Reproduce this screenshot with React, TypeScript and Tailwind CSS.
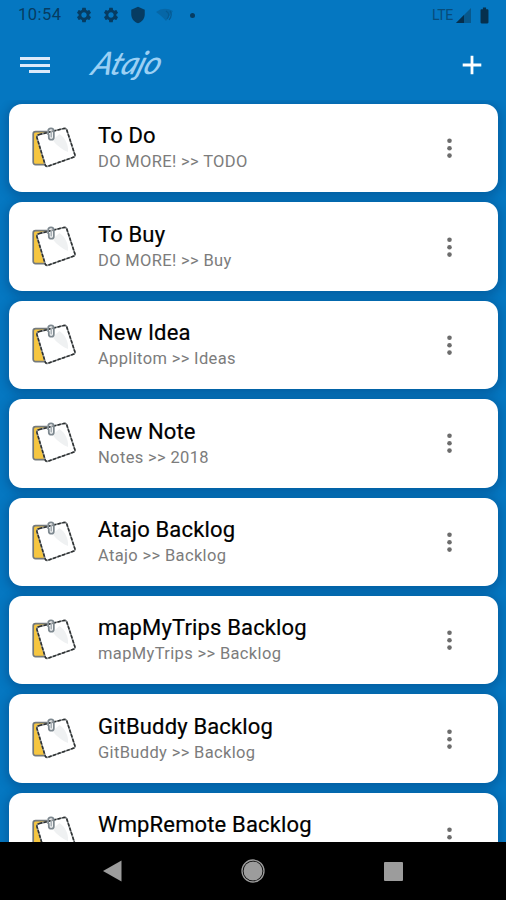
import { MdSettings, MdShield, MdBatteryFull } from "react-icons/md";

const shortcuts = [
  { title: "To Do", path: "DO MORE! >> TODO" },
  { title: "To Buy", path: "DO MORE! >> Buy" },
  { title: "New Idea", path: "Applitom >> Ideas" },
  { title: "New Note", path: "Notes >> 2018" },
  { title: "Atajo Backlog", path: "Atajo >> Backlog" },
  { title: "mapMyTrips Backlog", path: "mapMyTrips >> Backlog" },
  { title: "GitBuddy Backlog", path: "GitBuddy >> Backlog" },
  { title: "WmpRemote Backlog", path: "" },
];

const sheetPath =
  "M9 9.6 33.8 3.5q2.3-.5 3 1.5l8 24.4q.7 2.2-1.5 2.9L18 41.2q-2.2.7-2.9-1.5L7 12.8q-.6-2.5 2-3.2z";

function NoteIcon() {
  return (
    <svg className="-mt-[2px] ml-[21px] h-11 w-12 shrink-0" viewBox="0 0 48 44" fill="none">
      <path
        d="M5.6 6.6h11l2.4 33H5.6A2.4 2.4 0 0 1 3.2 37V9a2.4 2.4 0 0 1 2.4-2.4z"
        fill="#f6c640"
        stroke="#747a7c"
        strokeWidth="1.7"
      />
      <path d={sheetPath} fill="#fff" stroke="#8a8e90" strokeWidth="1.7" />
      <path d={sheetPath} stroke="#2b2f30" strokeWidth="1.5" strokeDasharray="3.2 1.6" />
      <path d="m22.5 15 7-6c6 4 9 11 8.500 18-5-2-11-6-15.500-12z" fill="#eff1f2" />
      <path
        d="M18.2 10V6.2a2.8 2.8 0 0 1 5.6 0v6a2.500 2.500 0 0 1-5 0V9.200"
        stroke="#7d888f"
        strokeWidth="1.8"
      />
      <path d="M21.2 6v6.5" stroke="#a9b1b6" strokeWidth="1.6" />
    </svg>
  );
}

function StatusBar() {
  return (
    <div className="flex h-[30px] shrink-0 items-center pl-[18px] pr-[12px] text-[#063c62]">
      <span className="w-[57px] pt-px text-[16.5px] tracking-[0.5px]">10:54</span>
      <MdSettings className="mr-[9px] size-[18px]" />
      <MdSettings className="mr-[9px] size-[18px]" />
      <MdShield className="mr-[9px] size-[18px]" />
      <svg className="h-[14px] w-[18px]" viewBox="0 0 18 14" fill="none">
        <path d="M0 4Q8-2 17 3L10 13Q7 9 0 4z" fill="#0667a7" />
        <path d="M10 3q5 3 1 8M14 3q3 4-1 9" stroke="#065a92" strokeWidth="1.2" />
      </svg>
      <span className="ml-[16px] size-[5px] rounded-full bg-current" />
      <span className="ml-auto pt-px text-[14px] tracking-[-0.3px] text-[#074c7a]">LTE</span>
      <svg className="ml-[3px] mt-px size-[15px]" viewBox="0 0 15 15">
        <path d="M15 0v15H0z" fill="#08588c" />
        <path d="M8 7v8H0z" fill="#062f4d" />
      </svg>
      <MdBatteryFull className="ml-[4px] size-[19px] text-[#06304d]" />
    </div>
  );
}

function Toolbar() {
  return (
    <div className="flex h-[70px] shrink-0 items-center pl-5 pr-[22px]">
      <button className="flex w-[30px] flex-col items-end gap-[3.5px]" aria-label="Menu">
        <span className="h-[3px] w-full bg-[#dceafa]" />
        <span className="h-[3px] w-full bg-[#dceafa]" />
        <span className="h-[3px] w-[21px] bg-[#dceafa]" />
      </button>
      <h1 className="-mt-1 ml-[44px] origin-left -skew-x-[20deg] -rotate-1 font-['Lato'] text-[32px] font-medium italic tracking-[-0.6px] text-[#9bd0f4]">
        Atajo
      </h1>
      <button className="ml-auto mr-[2px]" aria-label="Add">
        <svg className="size-5" viewBox="0 0 20 20" fill="none" stroke="#fff" strokeWidth="2.8">
          <path d="M10 .7v18.6M.7 10h18.6" />
        </svg>
      </button>
    </div>
  );
}

function ShortcutCard({ title, path }: { title: string; path: string }) {
  return (
    <div className="flex h-[88.4px] shrink-0 items-center rounded-[13px] bg-white shadow-[0_2px_8px_3px_rgba(0,40,90,0.27)]">
      <NoteIcon />
      <div className="ml-5 flex-1 pt-[0.4px]">
        <div className="text-[22px] leading-[28px] tracking-[0.15px] text-black [-webkit-text-stroke:0.2px_black]">
          {title}
        </div>
        <div className="h-6 text-[16.5px] leading-[24px] tracking-[0.35px] text-[#7c7c7c]">{path}</div>
      </div>
      <svg className="mr-[46.5px] h-5 w-[5px] fill-[#6c6c6c]" viewBox="0 0 5 20">
        <circle cx="2.5" cy="2.8" r="2.3" />
        <circle cx="2.5" cy="10.2" r="2.3" />
        <circle cx="2.5" cy="17.6" r="2.3" />
      </svg>
    </div>
  );
}

function NavigationBar() {
  return (
    <div className="flex h-[58px] shrink-0 items-center justify-between bg-black px-[103px]">
      <svg className="h-[22px] w-[19px]" viewBox="0 0 19 22">
        <path d="M18.5.5v21L0 11z" fill="#9c9c9c" />
      </svg>
      <svg className="size-6" viewBox="0 0 24 24">
        <circle cx="12" cy="12" r="11" fill="none" stroke="#9c9c9c" strokeWidth="1.3" />
        <circle cx="12" cy="12" r="9.5" fill="#9c9c9c" />
      </svg>
      <span className="size-[19px] rounded-[1px] bg-[#9c9c9c]" />
    </div>
  );
}

export default function App() {
  return (
    <div className="flex h-[900px] w-[506px] flex-col overflow-hidden bg-[#0577c1] font-['Roboto',sans-serif]">
      <StatusBar />
      <Toolbar />
      <div className="flex min-h-0 flex-1 flex-col gap-[10px] overflow-hidden pl-[9px] pr-2 pt-[4px]">
        {shortcuts.map((item) => (
          <ShortcutCard key={item.title} title={item.title} path={item.path} />
        ))}
      </div>
      <NavigationBar />
    </div>
  );
}
